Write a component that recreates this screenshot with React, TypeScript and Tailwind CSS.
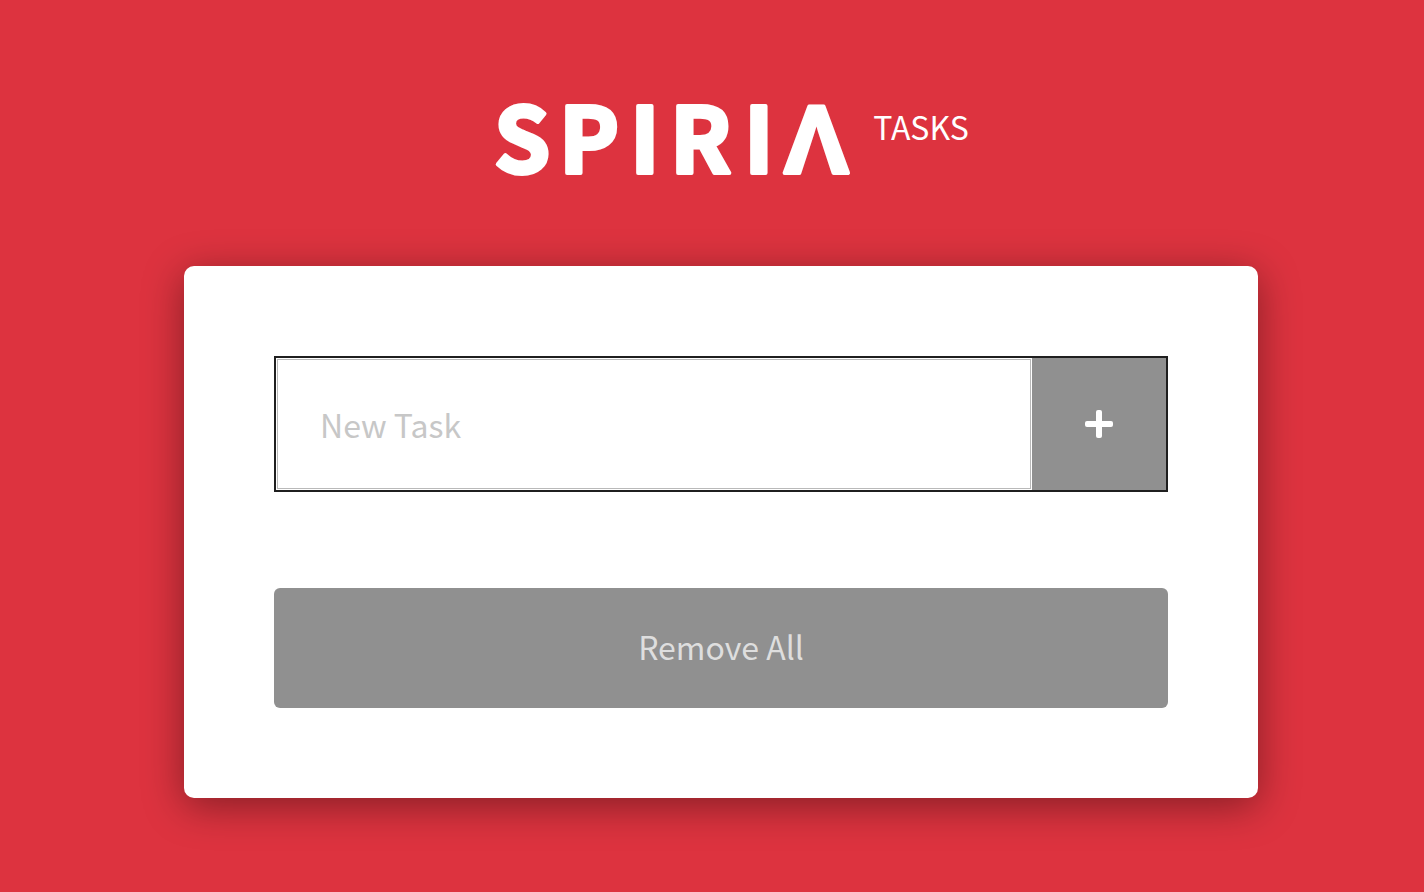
import { useState } from 'react';

function Logo() {
  return (
    <svg
      role="img"
      aria-label="Spiria"
      viewBox="0 0 356 72"
      className="h-[72px] w-[356px] shrink-0 overflow-visible fill-white stroke-white font-['Noto_Sans_CJK_SC',sans-serif] text-[90px] font-bold"
      strokeWidth="4"
      strokeLinejoin="round"
    >
      <text y="69" x="-1 64 135 175 249">
        SPIRI
      </text>
      <text y="69" x="289" className="font-['Liberation_Sans',sans-serif] text-[97px]">
        Λ
      </text>
    </svg>
  );
}

function PlusIcon() {
  return (
    <svg viewBox="0 0 28 28" className="size-7 fill-white" aria-hidden="true">
      <rect x="11" y="0" width="6" height="28" rx="2" />
      <rect x="0" y="11" width="28" height="6" rx="2" />
    </svg>
  );
}

export default function App() {
  const [task, setTask] = useState('');

  return (
    <div className="min-h-screen bg-[#dd333f] pt-[104px] pr-[166px] pb-[94px] pl-46 font-['Noto_Sans_CJK_SC','Noto_Sans',sans-serif] text-[32px] leading-[44px]">
      <header className="mb-[90px] flex items-start justify-center gap-[22px] pl-[22px]">
        <Logo />
        <h1 className="text-white">TASKS</h1>
      </header>
      <main className="rounded-[10px] bg-white p-[90px] shadow-[0_8px_40px_rgba(0,0,0,0.4)]">
        <form
          className="flex border-2 border-[#1f1f1f]"
          onSubmit={(event) => event.preventDefault()}
        >
          <div className="min-w-0 flex-1 p-px">
            <input
              type="text"
              aria-label="New Task"
              placeholder="New Task"
              value={task}
              onChange={(event) => setTask(event.target.value)}
              className="h-[130px] w-full border border-[#b9b9b9] bg-white px-[42px] text-[#333] outline-none placeholder:text-[#c7c7c7]"
            />
          </div>
          <button
            type="submit"
            aria-label="Add task"
            className="flex w-[134px] items-center justify-center bg-[#909090]"
          >
            <PlusIcon />
          </button>
        </form>
        <button
          type="button"
          className="mt-24 h-[120px] w-full rounded-md bg-[#909090] pb-1 text-[#dedede]"
        >
          Remove All
        </button>
      </main>
    </div>
  );
}
